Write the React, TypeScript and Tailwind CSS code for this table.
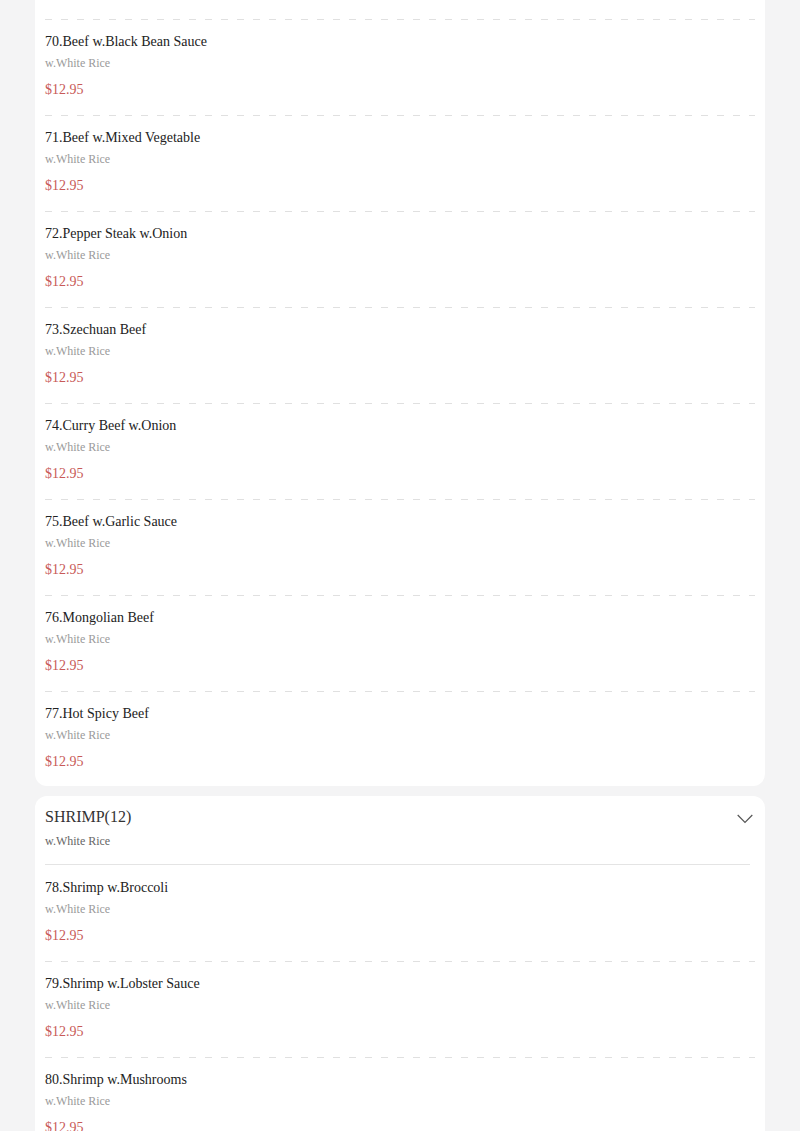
type Dish = {
  name: string;
  note: string;
  price: string;
};

const beef: Dish[] = [
  { name: '69.Beef w.Broccoli', note: 'w.White Rice', price: '$12.95' },
  { name: '70.Beef w.Black Bean Sauce', note: 'w.White Rice', price: '$12.95' },
  { name: '71.Beef w.Mixed Vegetable', note: 'w.White Rice', price: '$12.95' },
  { name: '72.Pepper Steak w.Onion', note: 'w.White Rice', price: '$12.95' },
  { name: '73.Szechuan Beef', note: 'w.White Rice', price: '$12.95' },
  { name: '74.Curry Beef w.Onion', note: 'w.White Rice', price: '$12.95' },
  { name: '75.Beef w.Garlic Sauce', note: 'w.White Rice', price: '$12.95' },
  { name: '76.Mongolian Beef', note: 'w.White Rice', price: '$12.95' },
  { name: '77.Hot Spicy Beef', note: 'w.White Rice', price: '$12.95' },
];

const shrimp: Dish[] = [
  { name: '78.Shrimp w.Broccoli', note: 'w.White Rice', price: '$12.95' },
  { name: '79.Shrimp w.Lobster Sauce', note: 'w.White Rice', price: '$12.95' },
  { name: '80.Shrimp w.Mushrooms', note: 'w.White Rice', price: '$12.95' },
  { name: '81.Shrimp w.Mixed Vegetable', note: 'w.White Rice', price: '$12.95' },
];

const Dashes = () => (
  <div className="h-px mx-[10px] bg-[repeating-linear-gradient(to_right,#e0e0e0_0_7px,transparent_7px_16px)]" />
);

const DishRow = ({ dish }: { dish: Dish }) => (
  <div className="px-[10px] pt-[12px] pb-[15px]">
    <div className="text-[14px] leading-[20px] text-[#222]">{dish.name}</div>
    <div className="mt-[3px] text-[12px] leading-[16px] text-[#9a9a9a]">{dish.note}</div>
    <div className="mt-[9px] text-[14px] leading-[20px] text-[#c85a58]">{dish.price}</div>
  </div>
);

const DishList = ({ dishes }: { dishes: Dish[] }) => (
  <div className="flex flex-col">
    {dishes.map((d, i) => (
      <div key={d.name}>
        {i > 0 && <Dashes />}
        <DishRow dish={d} />
      </div>
    ))}
  </div>
);

export default function App() {
  return (
    <div className="min-h-screen bg-[#f4f4f5] font-['Liberation_Serif',serif]">
      <div className="px-[35px] flex flex-col gap-[10px] -mt-[76px]">
        <div className="bg-white rounded-xl h-[862px] overflow-hidden">
          <DishList dishes={beef} />
        </div>

        <div className="bg-white rounded-xl">
          <div className="flex items-start justify-between pl-[10px] pr-[12px] pt-[9px]">
            <div>
              <div className="text-[16px] leading-[24px] text-[#333]">SHRIMP(12)</div>
              <div className="mt-1 text-[12px] leading-[16px] text-[#666]">w.White Rice</div>
            </div>
            <svg width="16" height="10" viewBox="0 0 16 10" className="mt-[9px]" fill="none">
              <polyline points="0.7,1 8,8.3 15.3,1" stroke="#555" strokeWidth="1.2" />
            </svg>
          </div>
          <div className="mt-[15px] mb-px ml-[10px] mr-[15px] h-px bg-[#e4e4e4]" />
          <DishList dishes={shrimp} />
        </div>
      </div>
    </div>
  );
}
